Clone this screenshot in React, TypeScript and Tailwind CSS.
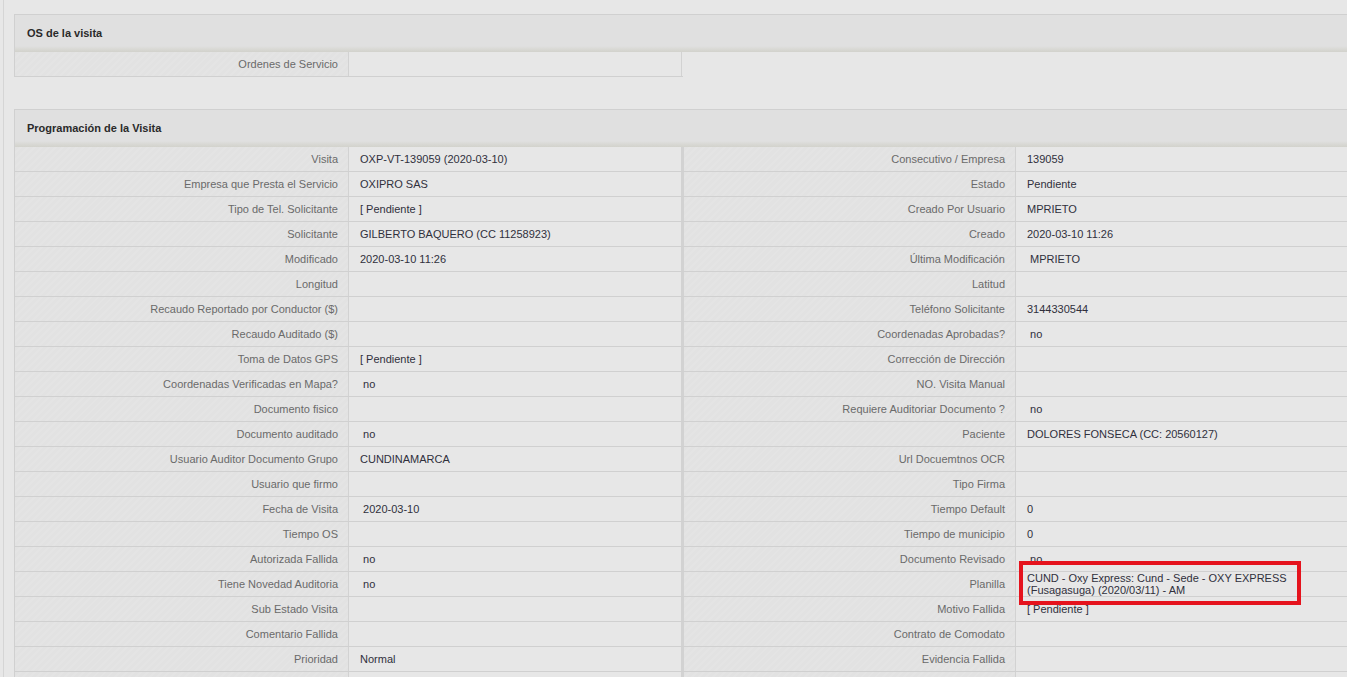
import React from "react";

type Row = [string, string, string, string];

const rows: Row[] = [
  ["Visita", "OXP-VT-139059 (2020-03-10)", "Consecutivo / Empresa", "139059"],
  ["Empresa que Presta el Servicio", "OXIPRO SAS", "Estado", "Pendiente"],
  ["Tipo de Tel. Solicitante", "[ Pendiente ]", "Creado Por Usuario", "MPRIETO"],
  ["Solicitante", "GILBERTO BAQUERO (CC 11258923)", "Creado", "2020-03-10 11:26"],
  ["Modificado", "2020-03-10 11:26", "Última Modificación", "\u00a0MPRIETO"],
  ["Longitud", "", "Latitud", ""],
  ["Recaudo Reportado por Conductor ($)", "", "Teléfono Solicitante", "3144330544"],
  ["Recaudo Auditado ($)", "", "Coordenadas Aprobadas?", "\u00a0no"],
  ["Toma de Datos GPS", "[ Pendiente ]", "Corrección de Dirección", ""],
  ["Coordenadas Verificadas en Mapa?", "\u00a0no", "NO. Visita Manual", ""],
  ["Documento fisico", "", "Requiere Auditoriar Documento ?", "\u00a0no"],
  ["Documento auditado", "\u00a0no", "Paciente", "DOLORES FONSECA (CC: 20560127)"],
  ["Usuario Auditor Documento Grupo", "CUNDINAMARCA", "Url Docuemtnos OCR", ""],
  ["Usuario que firmo", "", "Tipo Firma", ""],
  ["Fecha de Visita", "\u00a02020-03-10", "Tiempo Default", "0"],
  ["Tiempo OS", "", "Tiempo de municipio", "0"],
  ["Autorizada Fallida", "\u00a0no", "Documento Revisado", "\u00a0no"],
  [
    "Tiene Novedad Auditoria",
    "\u00a0no",
    "Planilla",
    "CUND - Oxy Express: Cund - Sede - OXY EXPRESS (Fusagasuga) (2020/03/11) - AM",
  ],
  ["Sub Estado Visita", "", "Motivo Fallida", "[ Pendiente ]"],
  ["Comentario Fallida", "", "Contrato de Comodato", ""],
  ["Prioridad", "Normal", "Evidencia Fallida", ""],
  ["", "", "", ""],
];

function Label({ text, wide }: { text: string; wide?: boolean }) {
  return (
    <div
      className={`flex h-full shrink-0 items-center justify-end border-r border-[#d2d2d2] bg-[repeating-linear-gradient(135deg,#e2e2e2_0px,#e2e2e2_3px,#e4e4e4_3px,#e4e4e4_5px)] pr-[10px] text-[#6a6a6a] ${
        wide ? "w-[334px] border-l-[2px] border-l-[#d2d2d2]" : "w-[334px]"
      }`}
    >
      {text}
    </div>
  );
}

function Value({ text, last }: { text: string; last?: boolean }) {
  return (
    <div
      className={`flex h-full shrink-0 items-center bg-[#e7e7e7] pl-[11px] leading-[12px] text-[#30303c] ${
        last ? "w-[334px] pr-[40px]" : "w-[333px] border-r border-[#d2d2d2]"
      }`}
    >
      <span className="whitespace-pre-wrap">{text}</span>
    </div>
  );
}

function Header({ title }: { title: string }) {
  return (
    <div className="flex h-[38px] w-[1336px] items-center border-l border-t border-[#d0d0d0] bg-[linear-gradient(to_bottom,#e0e0e0_0%,#e0e0e0_84%,#d9d9d5_92%,#d2d2cc_100%)] pl-[12px] font-bold text-[#2a2a2a]">
      {title}
    </div>
  );
}

export default function App() {
  return (
    <div
      className="h-[677px] w-[1347px] overflow-hidden bg-[#e7e7e7] text-[11px]"
      style={{ fontFamily: '"Liberation Sans", Arial, sans-serif' }}
    >
      <div className="ml-[3px] h-full border-l border-[#d5d5d5] pl-[10px] pt-[14px]">
        <Header title="OS de la visita" />
        <div className="flex h-[25px] w-[669px] border-b border-l border-[#d0d0d0]">
          <Label text="Ordenes de Servicio" />
          <Value text="" />
        </div>

        <div className="h-[32px]" />

        <Header title="Programación de la Visita" />
        <div className="relative w-[1336px]">
          {rows.map((r, i) => (
            <div
              key={i}
              className="flex h-[25px] border-b border-l border-[#d0d0d0]"
            >
              <Label text={r[0]} />
              <Value text={r[1]} />
              <Label text={r[2]} wide />
              <Value text={r[3]} last />
            </div>
          ))}
          <div className="pointer-events-none absolute left-[1005px] top-[414px] h-[44px] w-[282px] border-[4px] border-[#e5131d]" />
        </div>
      </div>
    </div>
  );
}
